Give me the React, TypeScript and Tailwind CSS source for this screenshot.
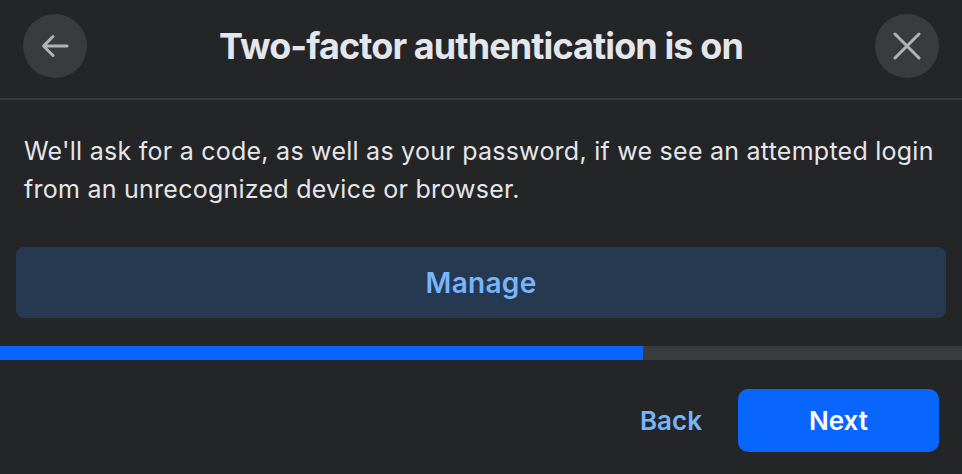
import React from "react";

export default function App() {
  return (
    <div
      className="w-[962px] h-[474px] bg-[#242526] flex flex-col overflow-hidden"
      style={{ fontFamily: "Inter, 'Liberation Sans', sans-serif" }}
    >
      {/* Header */}
      <div className="h-[100px] flex items-center justify-between px-[23px] border-b-2 border-[#38393a] shrink-0">
        <button className="w-[64px] h-[64px] rounded-full bg-[#3a3b3c] flex items-center justify-center -mt-[6px]">
          <svg width="28" height="24" viewBox="0 0 28 24" fill="none">
            <path
              d="M26 12H3M12 2.5L2.5 12L12 21.5"
              stroke="#b0b3b8"
              strokeWidth="3"
              strokeLinecap="round"
              strokeLinejoin="round"
            />
          </svg>
        </button>
        <div className="text-[36px] font-bold text-[#e4e6eb] tracking-[-0.9px] -mt-[6px]">
          Two-factor authentication is on
        </div>
        <button className="w-[64px] h-[64px] rounded-full bg-[#3a3b3c] flex items-center justify-center -mt-[6px]">
          <svg width="28" height="28" viewBox="0 0 28 28" fill="none">
            <path
              d="M2 2L26 26M26 2L2 26"
              stroke="#b0b3b8"
              strokeWidth="3"
              strokeLinecap="round"
            />
          </svg>
        </button>
      </div>

      {/* Body */}
      <div className="px-[24px] pt-[32px] text-[25px] leading-[38px] text-[#e4e6eb] tracking-[0.25px]">
        We'll ask for a code, as well as your password, if we see an attempted login
        from an unrecognized device or browser.
      </div>

      <div className="px-[16px] pt-[39px]">
        <button className="w-full h-[71px] rounded-[8px] bg-[#263951] text-[#75b6ff] text-[28px] font-semibold tracking-[0.3px]">
          Manage
        </button>
      </div>

      {/* Progress */}
      <div className="mt-[28px] h-[14px] flex bg-[#3a3b3c]">
        <div className="h-full bg-[#0866ff]" style={{ width: "643px" }} />
      </div>

      {/* Footer */}
      <div className="flex items-center justify-end pt-[29px] pr-[23px] gap-[36px]">
        <button className="text-[26px] font-semibold text-[#75b6ff]">Back</button>
        <button className="w-[201px] h-[63px] rounded-[10px] bg-[#0866ff] text-white text-[26px] font-semibold">
          Next
        </button>
      </div>
    </div>
  );
}
